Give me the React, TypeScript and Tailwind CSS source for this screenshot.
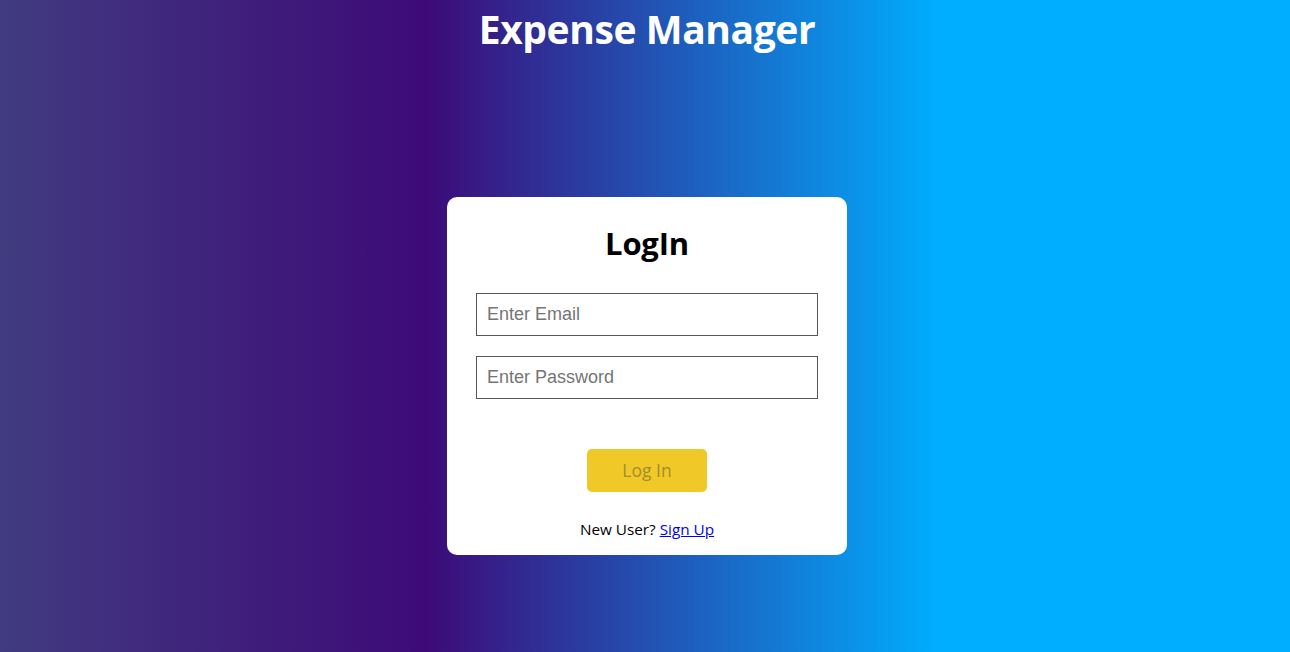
export default function App() {
  return (
    <div
      className="min-h-screen h-[652px] w-full flex flex-col items-center pl-[4px] bg-[linear-gradient(to_right,#413b80_0%,#3d0a77_33%,#00aeff_73%,#00aeff_100%)]"
      style={{ fontFamily: '"Open Sans", "Noto Sans", sans-serif' }}
    >
      <h1 className="h-[57px] flex items-center text-[39px] font-bold text-white tracking-[-0.4px] leading-none">
        Expense Manager
      </h1>

      <div className="mt-[140px] w-[400px] h-[358px] bg-white rounded-[10px] flex flex-col items-center pt-[26px]">
        <h2 className="text-[31px] font-bold text-black leading-[40px] tracking-[-0.2px]">LogIn</h2>

        <form className="w-full flex flex-col items-center mt-[30px]">
          <input
            type="email"
            placeholder="Enter Email"
            className="w-[342px] h-[43px] border border-[#555] px-[10px] text-[18px] placeholder:text-[#757575] outline-none"
            style={{ fontFamily: '"Liberation Sans", Arial, sans-serif' }}
          />
          <input
            type="password"
            placeholder="Enter Password"
            className="mt-[20px] w-[342px] h-[43px] border border-[#555] px-[10px] text-[18px] placeholder:text-[#757575] outline-none"
            style={{ fontFamily: '"Liberation Sans", Arial, sans-serif' }}
          />
          <button
            type="button"
            className="mt-[50px] w-[120px] h-[43px] bg-[#f0c929] rounded-[5px] text-[17.5px] text-[#a58c2c]"
          >
            Log In
          </button>
          <p className="mt-[26px] text-[15.3px] text-black">
            New User?{" "}
            <a href="#" className="text-[#0000ee] underline">
              Sign Up
            </a>
          </p>
        </form>
      </div>
    </div>
  );
}
